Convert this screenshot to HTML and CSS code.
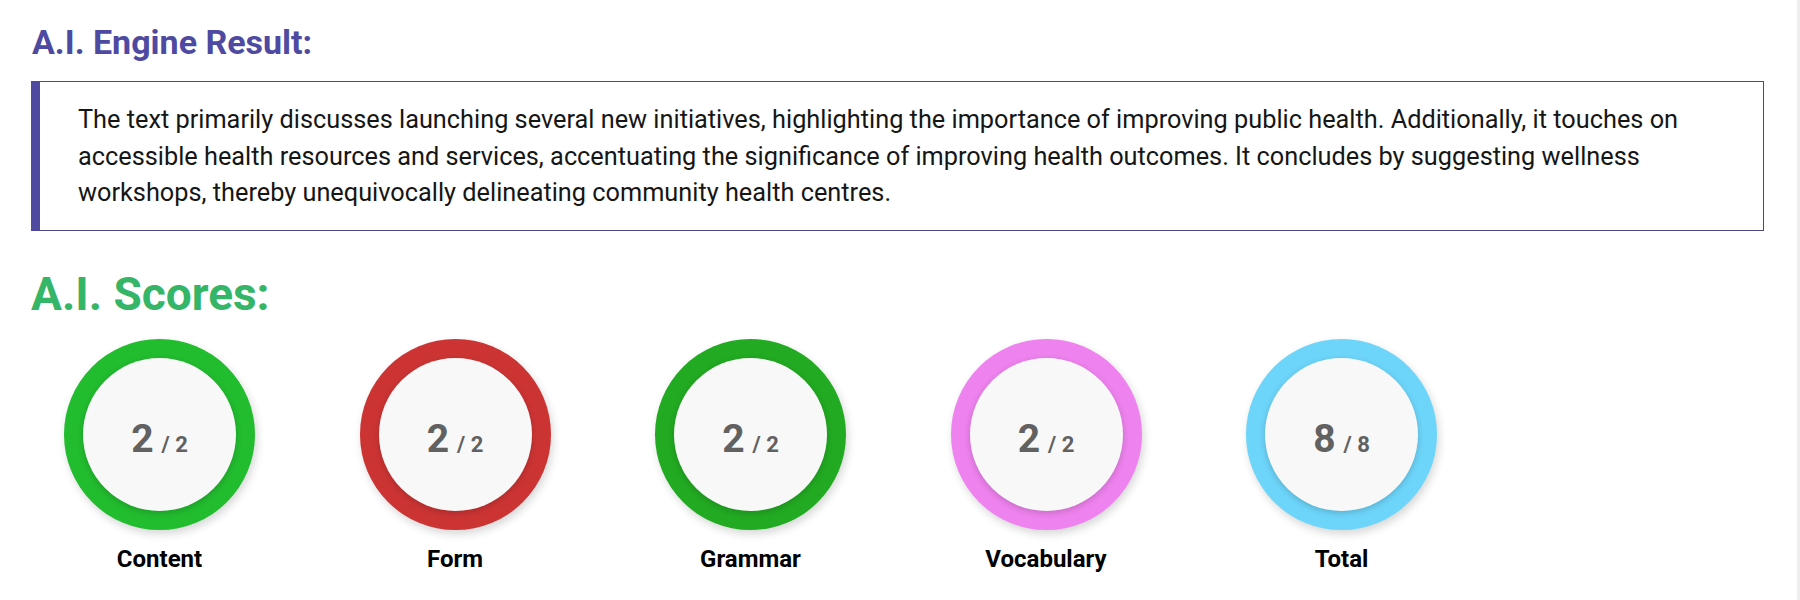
FILE: index.html
```html
<!DOCTYPE html>
<html lang="en">
<head>
<meta charset="utf-8">
<title>A.I. Engine Result</title>
<link rel="stylesheet" href="styles.css">
</head>
<body>
<main class="page">
  <h2 class="engine-title">A.I. Engine Result:</h2>
  <div class="result-box">
    <p>The text primarily discusses launching several new initiatives, highlighting the importance of improving public health. Additionally, it touches on accessible health resources and services, accentuating the significance of improving health outcomes. It concludes by suggesting wellness workshops, thereby unequivocally delineating community health centres.</p>
  </div>
  <h2 class="scores-title">A.I. Scores:</h2>
  <div class="scores">
    <div class="score">
      <div class="ring ring-content"><div class="inner"><span class="val">2</span><span class="max">/ 2</span></div></div>
      <div class="label">Content</div>
    </div>
    <div class="score">
      <div class="ring ring-form"><div class="inner"><span class="val">2</span><span class="max">/ 2</span></div></div>
      <div class="label">Form</div>
    </div>
    <div class="score">
      <div class="ring ring-grammar"><div class="inner"><span class="val">2</span><span class="max">/ 2</span></div></div>
      <div class="label">Grammar</div>
    </div>
    <div class="score">
      <div class="ring ring-vocab"><div class="inner"><span class="val">2</span><span class="max">/ 2</span></div></div>
      <div class="label">Vocabulary</div>
    </div>
    <div class="score">
      <div class="ring ring-total"><div class="inner"><span class="val">8</span><span class="max">/ 8</span></div></div>
      <div class="label">Total</div>
    </div>
  </div>
</main>
</body>
</html>
```

FILE: styles.css
```css
html, body {
  margin: 0;
  padding: 0;
}
body {
  background: linear-gradient(to left, #eeeef0 3px, #ffffff 3px);
  font-family: Roboto, "Liberation Sans", Arial, sans-serif;
  color: #111;
}
.page {
  padding: 22px 36px 0 31px;
}
.engine-title {
  margin: 0 0 19px 1px;
  font-size: 34px;
  font-weight: 700;
  line-height: 40px;
  color: #4f4aa1;
}
.result-box {
  border: 1px solid #4e4786;
  border-left: 9px solid #4f4aa1;
  padding: 20px 40px 18px 38px;
}
.result-box p {
  margin: 0;
  font-size: 25.3px;
  line-height: 36.7px;
  color: #161616;
}
.scores-title {
  margin: 36px 0 18px 0;
  font-size: 46px;
  font-weight: 700;
  line-height: 54px;
  color: #34b568;
}
.scores {
  display: flex;
  gap: 104.5px;
  padding-left: 33px;
}
.score {
  width: 191px;
  display: flex;
  flex-direction: column;
  align-items: center;
}
.ring {
  width: 191px;
  height: 191px;
  border-radius: 50%;
  box-sizing: border-box;
  padding: 19px;
  box-shadow: 2px 4px 9px rgba(0, 0, 0, 0.16);
}
.inner {
  width: 100%;
  height: 100%;
  border-radius: 50%;
  background: #f8f8f8;
  box-shadow: 0 2px 6px rgba(0, 0, 0, 0.18);
  display: flex;
  align-items: baseline;
  justify-content: center;
  padding-top: 59px;
  box-sizing: border-box;
  color: #616161;
  font-weight: 700;
}
.val {
  font-size: 39px;
  line-height: 44px;
}
.max {
  font-size: 22px;
  margin-left: 8px;
}
.ring-content { background: #22bc2f; }
.ring-form { background: #cc3434; }
.ring-grammar { background: #22aa22; }
.ring-vocab { background: #ee82ee; }
.ring-total { background: #6dd5fa; }
.label {
  margin-top: 15px;
  font-size: 24px;
  font-weight: 700;
  line-height: 28px;
  color: #000;
}
```
